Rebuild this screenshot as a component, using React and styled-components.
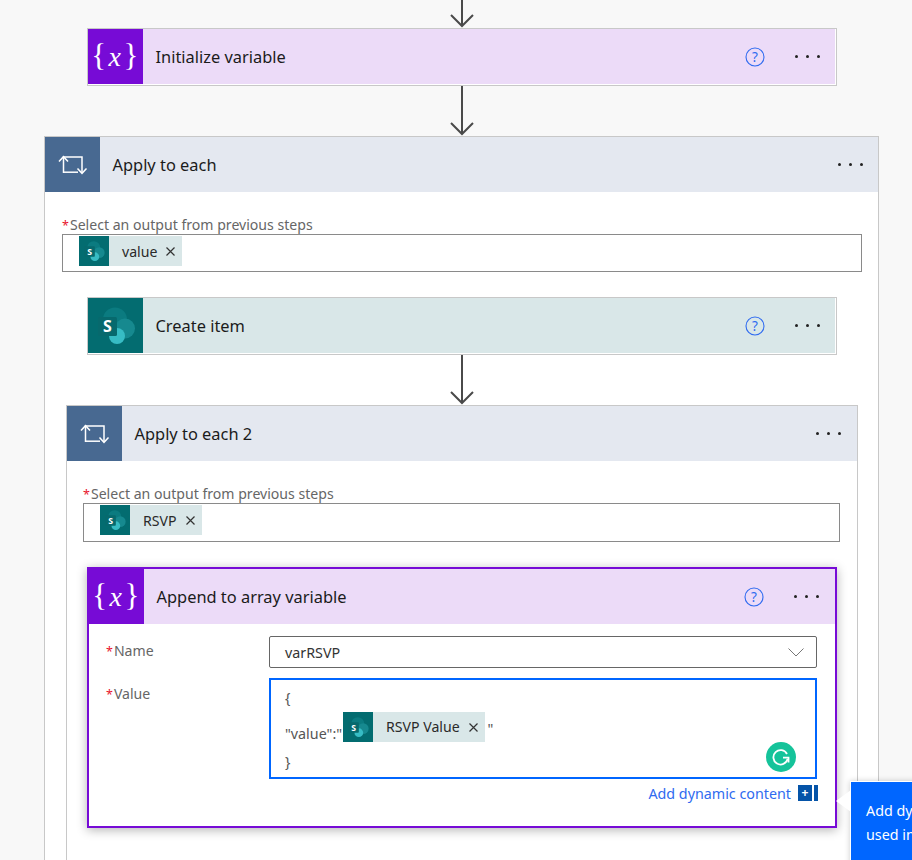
import React from "react";
import styled, { createGlobalStyle } from "styled-components";

const GlobalStyle = createGlobalStyle`
  html, body {
    margin: 0;
    padding: 0;
    background: #f8f8f8;
    font-family: "Noto Sans", "Open Sans", sans-serif;
  }
`;

const VariableIcon = () => (
  <Glyph>
    {"{"}
    <i>x</i>
    {"}"}
  </Glyph>
);

const LoopIcon = () => (
  <svg width="55" height="55" viewBox="0 0 55 55" fill="none" stroke="#fff" strokeWidth="1.5">
    <path d="M18.5 36V20H37V36" />
    <path d="M18.5 35.2H33" />
    <path d="M14 24.5l4.5-4.8 4.5 4.8" />
    <path d="M32.5 31.5l4.5 4.8 4.5-4.8" />
  </svg>
);

const SharePointIcon = ({ size = 55 }) => (
  <svg width={size} height={size} viewBox="0 0 55 55">
    <circle cx="27" cy="21.5" r="12" fill="#0b7b80" />
    <circle cx="37" cy="30.5" r="10" fill="#16898f" />
    <circle cx="29" cy="38" r="8" fill="#37bcc4" />
    <rect x="10" y="19" width="19" height="19" rx="1.5" fill="#07696d" />
    <text x="19.5" y="34" fontSize="16" fontWeight="700" fill="#fff" textAnchor="middle" fontFamily="Noto Sans, sans-serif">
      S
    </text>
  </svg>
);

const HelpIcon = () => (
  <svg width="20" height="20" viewBox="0 0 20 20">
    <circle cx="10" cy="10" r="9" fill="none" stroke="#2f6bf0" strokeWidth="1.1" />
    <text x="10" y="14.8" fontSize="13.5" fill="#2f6bf0" textAnchor="middle" fontFamily="Noto Sans, sans-serif">
      ?
    </text>
  </svg>
);

const DownArrow = ({ height }) => (
  <ArrowWrap>
    <svg width="26" height={height} viewBox={`0 0 26 ${height}`} fill="none" stroke="#4a4a4a" strokeWidth="2">
      <path d={`M13 0V${height - 2}`} />
      <path d={`M2 ${height - 13}L13 ${height - 2}L24 ${height - 13}`} />
    </svg>
  </ArrowWrap>
);

const CloseIcon = () => (
  <svg width="9" height="9" viewBox="0 0 9 9" stroke="#333" strokeWidth="1.2">
    <path d="M.5.5l8 8M8.5.5l-8 8" />
  </svg>
);

const Tag = ({ label }) => (
  <TagBox>
    <TagIcon>
      <SharePointIcon size={30} />
    </TagIcon>
    <TagText>{label}</TagText>
    <CloseIcon />
  </TagBox>
);

const ActionHeader = ({ kind, title, help, inset = 15, children }) => (
  <Header $kind={kind}>
    <IconBox $kind={kind}>{children}</IconBox>
    <Title>{title}</Title>
    {help && (
      <HelpSlot>
        <HelpIcon />
      </HelpSlot>
    )}
    <Dots $inset={inset}>
      <span />
      <span />
      <span />
    </Dots>
  </Header>
);

export default function App() {
  return (
    <Page>
      <GlobalStyle />
      <Canvas>
        <DownArrow height={28} />
        <ActionCard>
          <ActionHeader kind="variable" title="Initialize variable" help>
            <VariableIcon />
          </ActionHeader>
        </ActionCard>
        <DownArrow height={50} />
        <LoopCard>
          <ActionHeader kind="loop" title="Apply to each">
            <LoopIcon />
          </ActionHeader>
          <LoopBody>
            <FieldLabel>
              <Req>*</Req>Select an output from previous steps
            </FieldLabel>
            <TagInput $height={38}>
              <Tag label="value" />
            </TagInput>
            <InnerAction>
              <ActionCard $flush>
                <ActionHeader kind="sharepoint" title="Create item" help>
                  <SharePointIcon />
                </ActionHeader>
              </ActionCard>
            </InnerAction>
            <NestedArrow>
              <DownArrow height={50} />
            </NestedArrow>
            <NestedLoop>
              <ActionHeader kind="loop" title="Apply to each 2" inset={16}>
                <LoopIcon />
              </ActionHeader>
              <NestedBody>
                <FieldLabel>
                  <Req>*</Req>Select an output from previous steps
                </FieldLabel>
                <TagInput $height={39}>
                  <Tag label="RSVP" />
                </TagInput>
                <SelectedCard>
                  <ActionHeader kind="variable" title="Append to array variable" help inset={16}>
                    <VariableIcon />
                  </ActionHeader>
                  <FormGrid>
                    <FormLabel $top={6}>
                      <Req>*</Req>Name
                    </FormLabel>
                    <Select>
                      varRSVP
                      <svg width="16" height="9" viewBox="0 0 16 9" fill="none" stroke="#777" strokeWidth="1">
                        <path d="M.5.5L8 8l7.5-7.5" />
                      </svg>
                    </Select>
                    <FormLabel $top={7}>
                      <Req>*</Req>Value
                    </FormLabel>
                    <ValueBox>
                      <CodeLine>{"{"}</CodeLine>
                      <TagLine>
                        <ValueKey>"value":"</ValueKey>
                        <Tag label="RSVP Value" />
                        <Quote>"</Quote>
                      </TagLine>
                      <CodeLine>{"}"}</CodeLine>
                      <Grammarly>
                        <svg width="30" height="30" viewBox="0 0 30 30" fill="none" stroke="#fff" strokeWidth="1.8">
                          <path d="M21 12a7.2 7.2 0 1 0 .6 5" />
                          <path d="M17 15.6h5.5v5" />
                        </svg>
                      </Grammarly>
                    </ValueBox>
                  </FormGrid>
                  <DynamicRow>
                    <DynamicLink>Add dynamic content</DynamicLink>
                    <DynamicIcon>+</DynamicIcon>
                    <DynamicBar />
                  </DynamicRow>
                </SelectedCard>
              </NestedBody>
            </NestedLoop>
          </LoopBody>
        </LoopCard>
      </Canvas>
      <Tooltip>
        Add dynamic content from the apps and connectors
        <br />
        used in this flow.
      </Tooltip>
    </Page>
  );
}

const headerColors = {
  variable: { bg: "#ecdbf8", icon: "#770bd6" },
  loop: { bg: "#e4e8f0", icon: "#486991" },
  sharepoint: { bg: "#d9e7e8", icon: "#036c70" },
};

const Page = styled.div`
  position: relative;
  width: 912px;
  height: 860px;
  overflow: hidden;
  background: #f8f8f8;
`;

const Canvas = styled.div`
  display: flex;
  flex-direction: column;
  width: 835px;
  margin-left: 44px;
`;

const ArrowWrap = styled.div`
  display: flex;
  justify-content: center;
  line-height: 0;
`;

const ActionCard = styled.div`
  box-sizing: border-box;
  width: 750px;
  margin-left: ${(p) => (p.$flush ? "0" : "43px")};
  border: 1px solid #c8c8c8;
  background: #fff;
  padding: 0 1px 1px 0;
`;

const Header = styled.div`
  display: flex;
  align-items: center;
  height: 55px;
  background: ${(p) => headerColors[p.$kind].bg};
`;

const IconBox = styled.div`
  display: flex;
  align-items: center;
  justify-content: center;
  flex: none;
  width: 55px;
  height: 55px;
  background: ${(p) => headerColors[p.$kind].icon};
`;

const Glyph = styled.div`
  color: #fff;
  font-family: "Liberation Serif", serif;
  font-size: 31px;
  line-height: 1;
  margin-top: -3px;
  letter-spacing: 1.5px;

  i {
    font-size: 28px;
    padding: 0 1px;
  }
`;

const Title = styled.div`
  flex: 1;
  margin-left: 12.5px;
  font-size: 16.4px;
  color: #1b1b1b;
`;

const HelpSlot = styled.div`
  display: flex;
  line-height: 0;
  margin-right: 30px;
`;

const Dots = styled.div`
  display: flex;
  gap: 7.5px;
  margin-right: ${(p) => p.$inset}px;

  span {
    width: 3.5px;
    height: 3.5px;
    border-radius: 50%;
    background: #222;
  }
`;

const LoopCard = styled.div`
  box-sizing: border-box;
  width: 835px;
  border: 1px solid #c8c8c8;
  border-bottom: none;
  background: #fff;
`;

const LoopBody = styled.div`
  padding: 24px 16px 0 17px;
`;

const FieldLabel = styled.div`
  font-size: 14.1px;
  line-height: 18px;
  color: #666;
  white-space: nowrap;
`;

const Req = styled.span`
  color: #e8132b;
  font-size: 12.5px;
  line-height: 0;
  margin-right: 1px;
`;

const TagInput = styled.div`
  box-sizing: border-box;
  height: ${(p) => p.$height}px;
  border: 1px solid #8a8a8a;
  padding: 1px 16px;
`;

const TagBox = styled.div`
  display: inline-flex;
  align-items: center;
  height: 30px;
  background: #d9e7e8;
  padding-right: 7px;
`;

const TagIcon = styled.div`
  width: 30px;
  height: 30px;
  line-height: 0;
  background: #036c70;
`;

const TagText = styled.span`
  font-size: 14.1px;
  color: #2a2a2a;
  margin: 0 9px 0 13px;
  white-space: nowrap;
`;

const InnerAction = styled.div`
  margin: 25px 0 0 25px;
`;

const NestedArrow = styled.div`
  width: 800px;
`;

const NestedLoop = styled.div`
  box-sizing: border-box;
  width: 792px;
  margin-left: 4px;
  border: 1px solid #c8c8c8;
  border-bottom: none;
  background: #fff;
`;

const NestedBody = styled.div`
  padding: 24px 17px 100px 16px;
`;

const SelectedCard = styled.div`
  box-sizing: border-box;
  width: 750px;
  height: 261px;
  margin: 25px 0 0 4px;
  border: 2px solid #770bd6;
  background: #fff;
  box-shadow: 0 2px 10px rgba(0, 0, 0, 0.3);
`;

const FormGrid = styled.div`
  display: grid;
  grid-template-columns: 163px 548px;
  row-gap: 10px;
  padding: 12px 0 0 17px;
`;

const FormLabel = styled.div`
  font-size: 14.1px;
  line-height: 18px;
  padding-top: ${(p) => p.$top}px;
  color: #666;
`;

const Select = styled.div`
  box-sizing: border-box;
  display: flex;
  align-items: center;
  justify-content: space-between;
  height: 32px;
  border: 1px solid #666;
  border-radius: 2px;
  padding: 0 12px 0 15px;
  font-size: 14.3px;
  color: #333;
`;

const ValueBox = styled.div`
  position: relative;
  box-sizing: border-box;
  height: 101px;
  border: 2px solid #0066ff;
  padding: 8px 14px 0;
  font-size: 14.3px;
  color: #555;
`;

const CodeLine = styled.div`
  line-height: 20px;
`;

const TagLine = styled.div`
  display: flex;
  align-items: center;
  height: 30px;
  margin: 4px 0 10px;
  line-height: 30px;
`;

const ValueKey = styled.span`
  margin: 14px 1px 0 0;
`;

const Quote = styled.span`
  margin: 4px 0 0 3px;
`;

const Grammarly = styled.div`
  position: absolute;
  right: 19px;
  bottom: 5px;
  width: 30px;
  height: 30px;
  border-radius: 50%;
  background: #15c39a;
  line-height: 0;
`;

const DynamicRow = styled.div`
  display: flex;
  align-items: center;
  justify-content: flex-end;
  height: 16px;
  margin-top: 6px;
  padding-right: 17px;
`;

const DynamicLink = styled.span`
  font-size: 14.3px;
  color: #2f6bf0;
  margin-right: 7px;
`;

const DynamicIcon = styled.span`
  width: 14px;
  height: 16px;
  background: #0554a8;
  color: #fff;
  font-size: 12px;
  font-weight: 700;
  line-height: 16px;
  text-align: center;
`;

const DynamicBar = styled.span`
  width: 4px;
  height: 16px;
  margin-left: 2px;
  background: #0554a8;
`;

const Tooltip = styled.div`
  position: absolute;
  left: 850px;
  top: 781px;
  width: 400px;
  height: 120px;
  box-sizing: border-box;
  padding: 17px 15px;
  border: solid #fff;
  border-width: 1px 0 0 1px;
  background: #0066ff;
  color: #fff;
  font-size: 14.3px;
  line-height: 24px;
  white-space: nowrap;
  box-shadow: 0 0 6px rgba(0, 0, 0, 0.2);

  &::before {
    content: "";
    position: absolute;
    left: -15px;
    top: 8px;
    border-style: solid;
    border-width: 11px 15px 11px 0;
    border-color: transparent #fff transparent transparent;
  }
`;
